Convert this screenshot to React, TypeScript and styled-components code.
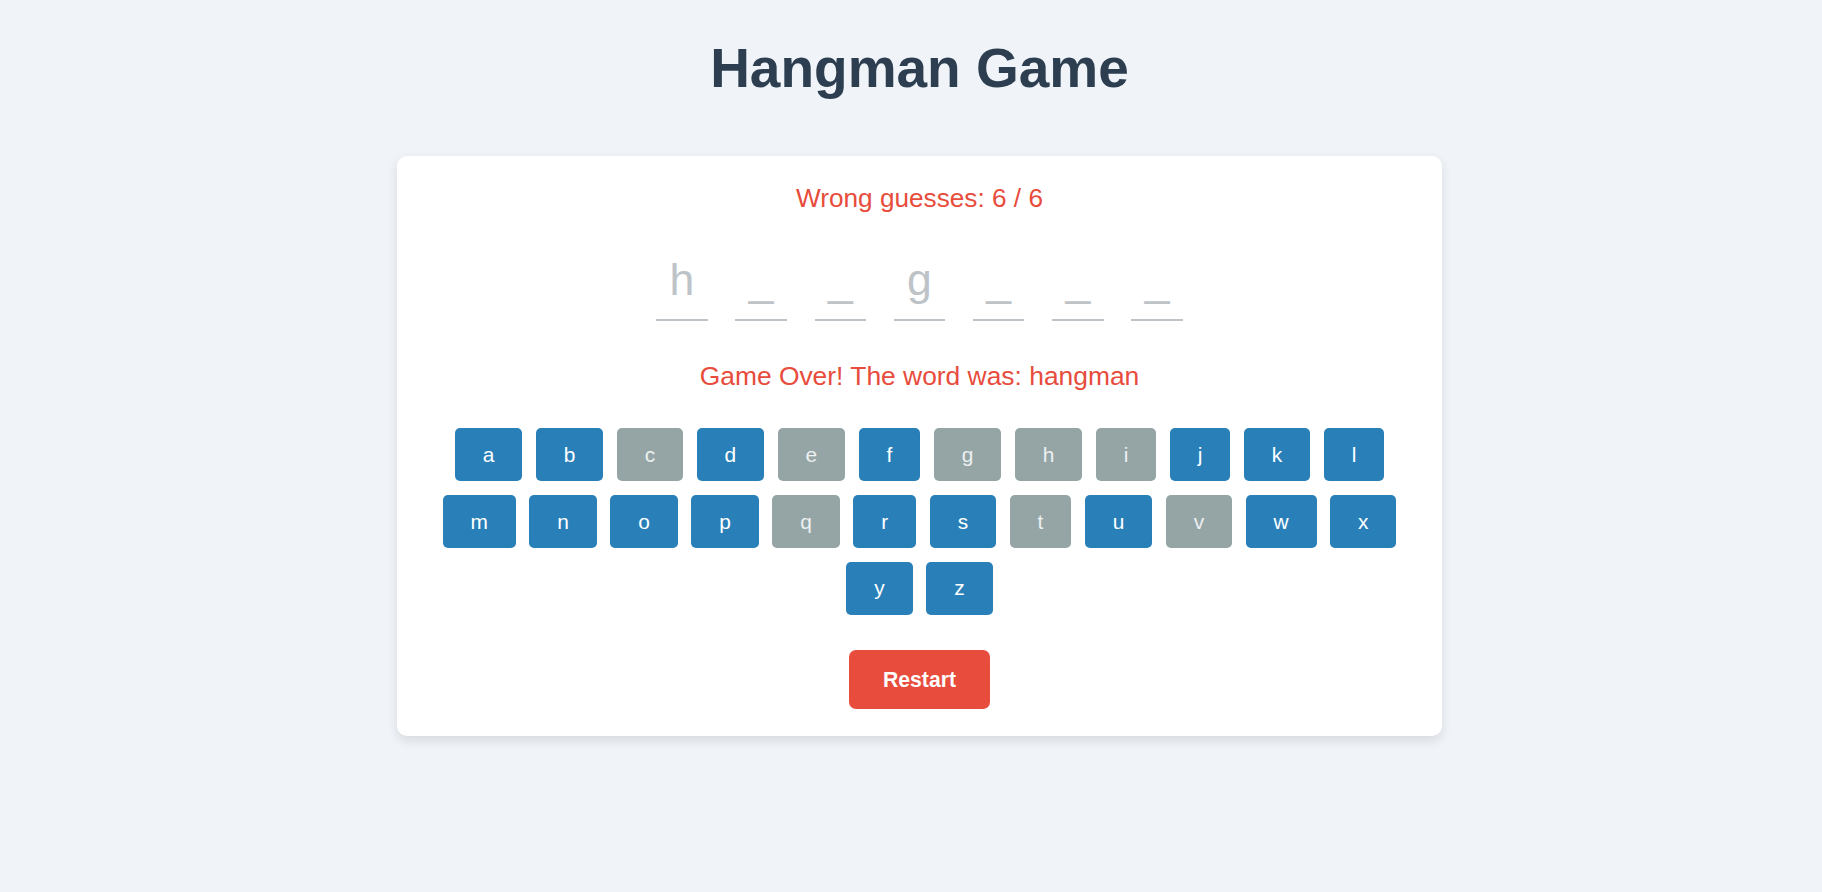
import styled, { createGlobalStyle } from 'styled-components';

const WORD = 'hangman';
const GUESSED = ['c', 'e', 'g', 'h', 'i', 'q', 't', 'v'];
const REVEALED = ['h', 'g'];
const MAX_WRONG = 6;
const ALPHABET = 'abcdefghijklmnopqrstuvwxyz'.split('');

const GlobalStyle = createGlobalStyle`
  * {
    box-sizing: border-box;
  }
  body {
    margin: 0;
    background: #f0f4f8;
    font-family: 'Liberation Sans', Arial, sans-serif;
  }
`;

function App() {
  const wrongCount = GUESSED.filter((l) => !WORD.includes(l)).length;

  return (
    <Page>
      <GlobalStyle />
      <Title>Hangman Game</Title>
      <Card>
        <Status>
          Wrong guesses: {wrongCount} / {MAX_WRONG}
        </Status>
        <WordRow>
          {WORD.split('').map((letter, i) => (
            <Slot key={i}>{REVEALED.includes(letter) ? letter : '_'}</Slot>
          ))}
        </WordRow>
        <Message>Game Over! The word was: {WORD}</Message>
        <Keyboard>
          {ALPHABET.map((letter) => (
            <Key key={letter} $used={GUESSED.includes(letter)} disabled>
              {letter}
            </Key>
          ))}
        </Keyboard>
        <RestartButton>Restart</RestartButton>
      </Card>
    </Page>
  );
}

export default App;

const Page = styled.div`
  min-height: 100vh;
  display: flex;
  flex-direction: column;
  align-items: center;
  padding: 36px 0 40px 17px;
`;

const Title = styled.h1`
  margin: 0 0 55.8px;
  font-size: 55px;
  font-weight: 700;
  color: #2c3e50;
`;

const Card = styled.div`
  width: 1045px;
  display: flex;
  flex-direction: column;
  align-items: center;
  padding: 27.7px 37.2px;
  background: #ffffff;
  border-radius: 10px;
  box-shadow: 0 4.6px 11px rgba(0, 0, 0, 0.1);
`;

const Status = styled.p`
  margin: 0;
  font-size: 26.2px;
  color: #e74c3c;
`;

const WordRow = styled.div`
  display: flex;
  gap: 27.6px;
  margin-top: 40.4px;
`;

const Slot = styled.span`
  width: 51.6px;
  padding-bottom: 14.2px;
  border-bottom: 2.7px solid #bdc3c7;
  text-align: center;
  font-size: 44.6px;
  color: #bdc3c7;
`;

const Message = styled.p`
  margin: 40.3px 0 0;
  font-size: 26.4px;
  color: #e74c3c;
`;

const Keyboard = styled.div`
  width: 100%;
  display: flex;
  flex-wrap: wrap;
  justify-content: center;
  gap: 13.6px;
  margin-top: 35.5px;
`;

const Key = styled.button<{ $used: boolean }>`
  padding: 14.7px 27.9px;
  border: none;
  border-radius: 5px;
  font-family: inherit;
  font-size: 20.9px;
  line-height: 24px;
  color: ${(p) => (p.$used ? '#ecf0f1' : '#ffffff')};
  background: ${(p) => (p.$used ? '#95a5a6' : '#2980b9')};
  cursor: pointer;
`;

const RestartButton = styled.button`
  margin-top: 35.3px;
  padding: 17.1px 34.3px;
  border: none;
  border-radius: 7px;
  font-family: inherit;
  font-size: 21.2px;
  font-weight: 700;
  line-height: 24px;
  color: #ffffff;
  background: #e74c3c;
  cursor: pointer;
`;
